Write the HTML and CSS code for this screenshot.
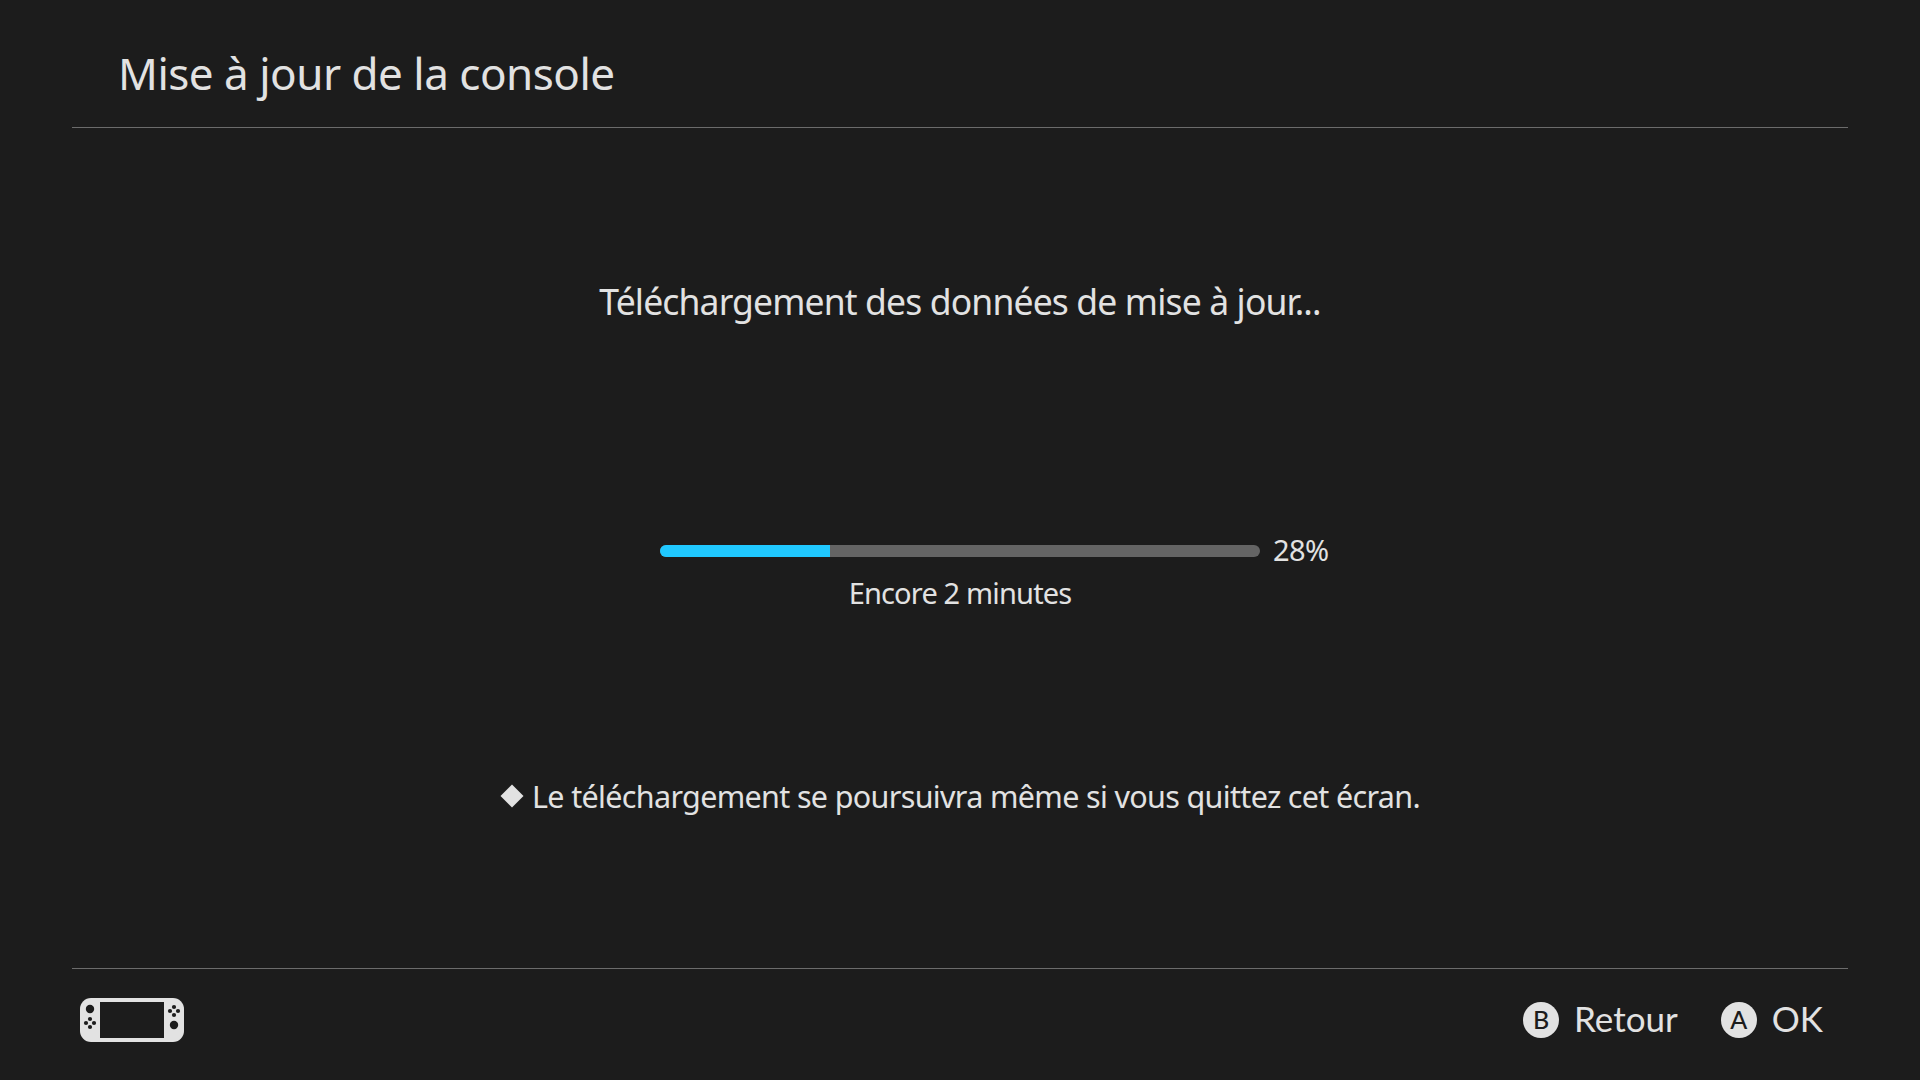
FILE: index.html
```html
<!DOCTYPE html>
<html lang="fr">
<head>
    <meta charset="UTF-8">
    <meta name="viewport" content="width=device-width, initial-scale=1.0">
    <title>Mise à jour de la console</title>
    <link rel="stylesheet" href="styles.css">
</head>
<body>

    <header class="header">
        <h1>Mise à jour de la console</h1>
    </header>

    <main class="content">
        <p class="status"><span>Téléchargement des données de mise à jour...</span></p>
        <div class="progress">
            <div class="bar">
                <div class="fill" style="width: 28.33%"></div>
            </div>
            <span class="percent">28%</span>
        </div>
        <p class="remaining"><span>Encore 2 minutes</span></p>
        <p class="note">
            <svg class="diamond" width="24" height="24" viewBox="0 0 24 24"><path d="M12 .5 23.5 12 12 23.5.5 12z"/></svg>
            <span>Le téléchargement se poursuivra même si vous quittez cet écran.</span>
        </p>
    </main>

    <footer class="footer">
        <svg class="console" width="104" height="44" viewBox="0 0 104 44">
            <rect class="light" width="104" height="44" rx="11"/>
            <rect class="dark" x="20" y="4" width="64" height="36"/>
            <g class="dark">
                <circle cx="10" cy="11" r="4.2"/>
                <circle cx="10" cy="21" r="2.1"/>
                <circle cx="6" cy="25" r="2.1"/>
                <circle cx="14" cy="25" r="2.1"/>
                <circle cx="10" cy="29" r="2.1"/>
                <circle cx="94" cy="9" r="2.1"/>
                <circle cx="90" cy="13" r="2.1"/>
                <circle cx="98" cy="13" r="2.1"/>
                <circle cx="94" cy="17" r="2.1"/>
                <circle cx="94" cy="27" r="4.2"/>
            </g>
        </svg>
        <div class="actions">
            <div class="action">
                <span class="key">B</span>
                <span class="label">Retour</span>
            </div>
            <div class="action">
                <span class="key">A</span>
                <span class="label">OK</span>
            </div>
        </div>
    </footer>

</body>
</html>
```
FILE: styles.css
```css
* {
    box-sizing: border-box;
}
body {
    margin: 0;
    height: 100vh;
    display: flex;
    flex-direction: column;
    overflow: hidden;
    background-color: #1c1c1c;
    color: #e2e2e2;
    font-family: "Noto Sans", sans-serif;
}
h1, p {
    margin: 0;
    font-weight: 400;
    white-space: nowrap;
}
.header {
    height: 128px;
    margin: 0 72px;
    padding: 43px 46px 0;
    border-bottom: 1px solid #6b6b6b;
}
h1 {
    font-size: 44px;
    line-height: 60px;
    letter-spacing: -0.5px;
}
.content {
    flex: 1;
    text-align: center;
}
.status {
    margin-top: 149px;
    font-size: 35.5px;
    line-height: 48px;
    letter-spacing: -0.86px;
}
.progress {
    display: grid;
    grid-template-columns: 1fr 600px 1fr;
    align-items: center;
    height: 44px;
    margin-top: 204px;
}
.bar {
    grid-column: 2;
    height: 12px;
    border-radius: 6px;
    overflow: hidden;
    background-color: #646464;
}
.fill {
    height: 100%;
    background-color: #20c8ff;
}
.percent {
    padding: 0 0 3px 13px;
    text-align: left;
    font-size: 29px;
    line-height: 40px;
    letter-spacing: -0.6px;
}
.remaining {
    font-size: 29px;
    line-height: 40px;
    letter-spacing: -0.84px;
}
.note {
    display: flex;
    justify-content: center;
    align-items: center;
    gap: 8px;
    margin-top: 163px;
    font-size: 30.5px;
    line-height: 40px;
    letter-spacing: -0.66px;
}
.diamond {
    fill: #e2e2e2;
}
.footer {
    display: flex;
    justify-content: space-between;
    align-items: center;
    height: 112px;
    margin: 0 72px;
    padding: 0 25px 9px 8px;
    border-top: 1px solid #6b6b6b;
}
.light {
    fill: #e2e2e2;
}
.dark {
    fill: #1c1c1c;
}
.actions {
    display: flex;
    gap: 43px;
    font-family: Lato, sans-serif;
}
.action {
    display: flex;
    align-items: center;
    gap: 15px;
}
.key {
    width: 36px;
    height: 36px;
    border-radius: 50%;
    background-color: #e2e2e2;
    color: #1c1c1c;
    text-align: center;
    font-size: 25px;
    line-height: 35px;
    font-weight: 500;
}
.label {
    padding-bottom: 4px;
    font-size: 35px;
    line-height: 44px;
}
```
